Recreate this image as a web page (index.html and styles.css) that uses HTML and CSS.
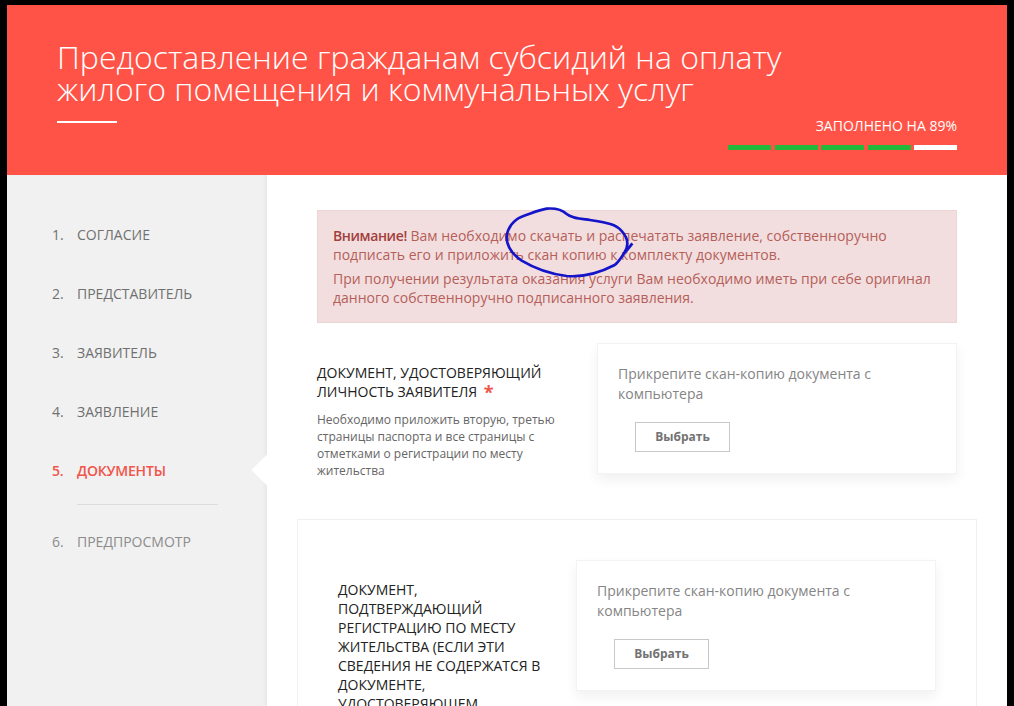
FILE: index.html
```html
<!DOCTYPE html>
<html lang="ru">
<head>
  <meta charset="UTF-8">
  <title>Предоставление гражданам субсидий</title>
  <link rel="stylesheet" href="styles.css">
</head>
<body>
  <div class="page">
    <header class="top">
      <h1>Предоставление гражданам субсидий на оплату жилого помещения и коммунальных услуг</h1>
      <div class="title-line"></div>
      <div class="progress">
        <div class="progress-text">ЗАПОЛНЕНО НА 89%</div>
        <div class="progress-bar">
          <span class="seg done"></span>
          <span class="seg done"></span>
          <span class="seg done"></span>
          <span class="seg done"></span>
          <span class="seg"></span>
        </div>
      </div>
    </header>

    <div class="main">
      <nav class="side">
        <div class="step"><span class="num">1.</span>СОГЛАСИЕ</div>
        <div class="step"><span class="num">2.</span>ПРЕДСТАВИТЕЛЬ</div>
        <div class="step"><span class="num">3.</span>ЗАЯВИТЕЛЬ</div>
        <div class="step"><span class="num">4.</span>ЗАЯВЛЕНИЕ</div>
        <div class="step active"><span class="num">5.</span>ДОКУМЕНТЫ</div>
        <div class="side-line"></div>
        <div class="step muted"><span class="num">6.</span>ПРЕДПРОСМОТР</div>
      </nav>

      <section class="content">
        <div class="alert">
          <p><b>Внимание!</b> Вам необходимо скачать и распечатать заявление, собственноручно подписать его и приложить скан копию к комплекту документов.</p>
          <p>При получении результата оказания услуги Вам необходимо иметь при себе оригинал данного собственноручно подписанного заявления.</p>
        </div>

        <div class="doc">
          <div class="doc-info">
            <h3>ДОКУМЕНТ, УДОСТОВЕРЯЮЩИЙ ЛИЧНОСТЬ ЗАЯВИТЕЛЯ <span class="req">*</span></h3>
            <p>Необходимо приложить вторую, третью страницы паспорта и все страницы с отметками о регистрации по месту жительства</p>
          </div>
          <div class="upload">
            <p>Прикрепите скан-копию документа с компьютера</p>
            <button type="button">Выбрать</button>
          </div>
        </div>

        <div class="doc-box">
          <div class="doc-info">
            <h3>ДОКУМЕНТ, ПОДТВЕРЖДАЮЩИЙ РЕГИСТРАЦИЮ ПО МЕСТУ ЖИТЕЛЬСТВА (ЕСЛИ ЭТИ СВЕДЕНИЯ НЕ СОДЕРЖАТСЯ В ДОКУМЕНТЕ, УДОСТОВЕРЯЮЩЕМ</h3>
          </div>
          <div class="upload">
            <p>Прикрепите скан-копию документа с компьютера</p>
            <button type="button">Выбрать</button>
          </div>
        </div>
      </section>
    </div>

    <svg class="scribble" width="150" height="80" viewBox="0 0 450 240">
      <path d="M397 130 C388 142 380 152 372 160 C386 140 388 118 364 92 C348 72 320 68 270 60 C240 56 215 55 200 42 C185 28 165 24 140 26 C115 30 95 40 65 50 C40 60 22 85 20 110 C20 140 40 165 65 182 C100 203 150 222 200 228 C250 232 300 218 344 195 C356 186 364 172 372 160"/>
    </svg>
  </div>
</body>
</html>
```

FILE: styles.css
```css
html, body { margin: 0; height: 100%; overflow: hidden; background: #000; }
body { font-family: "Open Sans", Arial, sans-serif; padding: 5px 7px 0; box-sizing: border-box; }
.page { width: 1000px; height: 701px; overflow: hidden; background: #fff; }

.top { height: 170px; box-sizing: border-box; background: #ff5347; color: #fff; padding: 36px 50px 0; position: relative; }
.top h1 { margin: 0; width: 800px; font-size: 32px; font-weight: 300; line-height: 32px; color: #fff; }
.title-line { width: 60px; height: 2px; background: #fff; margin-top: 16px; }
.progress { position: absolute; right: 50px; bottom: 25px; width: 229px; text-align: right; }
.progress-text { font-size: 14px; font-weight: 400; line-height: 18px; margin-bottom: 10px; white-space: nowrap; }
.progress-bar { display: flex; gap: 3.5px; }
.seg { flex: 1; height: 5px; background: #fff; }
.seg.done { background: #22b83a; }

.main { display: flex; height: 531px; }
.side { width: 260px; flex: none; box-sizing: border-box; background: #f1f1f1; padding: 50px 0 0 45px; position: relative; box-shadow: inset -4px 0 4px -3px #e2e2e2; }
.step { font-size: 14px; line-height: 20px; color: #707070; margin-bottom: 39px; }
.num { display: inline-block; width: 25px; }
.step.active { color: #f0544a; font-weight: 600; letter-spacing: -.2px; margin-bottom: 23px; }
.step.active::after { content: ""; position: absolute; right: -11px; top: 284px; width: 22px; height: 22px; background: #fff; transform: rotate(45deg); }
.step.muted { color: #8c8c8c; }
.side-line { width: 141px; height: 1px; background: #dcdcdc; margin: 0 0 27px 25px; }

.content { flex: 1; padding: 35px 50px 0; min-width: 0; position: relative; background: #fff; }
.alert { box-sizing: border-box; height: 113px; padding: 15px 15px 0; background: #f2dede; border: 1px solid #ebd5d5; color: #b55e5a; font-size: 14px; line-height: 19px; }
.alert p { margin: 0 0 5px; }
.alert b { color: #a33f3c; font-weight: 600; letter-spacing: -.4px; }

.doc { display: flex; margin-top: 20px; }
.doc .doc-info { width: 280px; padding-top: 20px; }
.doc-info h3 { margin: 0; font-size: 14px; font-weight: 500; line-height: 19px; color: #222; }
.doc-info p { margin: 10px 0 0; font-size: 12px; line-height: 17px; color: #666; width: 245px; }
.req { color: #f0544a; font-size: 18px; font-weight: 700; margin-left: 3px; line-height: 14px; vertical-align: -2px; }

.upload { width: 360px; height: 131px; flex: none; box-sizing: border-box; padding: 20px 20px 0; background: #fff; border: 1px solid #f3f3f3; box-shadow: 0 6px 12px rgba(0,0,0,.06); }
.upload p { margin: 0 0 19px; font-size: 14px; line-height: 19.5px; color: #858585; }
.upload button { display: block; width: 95px; height: 30px; margin-left: 17px; padding: 0 0 2px; background: #fff; border: 1px solid #c8c8c8; font-family: inherit; font-size: 12px; font-weight: 700; color: #737373; }
.doc .upload { margin-left: auto; }

.doc-box { display: flex; justify-content: space-between; width: 680px; height: 300px; box-sizing: border-box; margin: 40px 0 0 -20px; padding: 40px 40px 0 40px; border: 1px solid #f0f0f0; }
.doc-box .doc-info { width: 206px; padding-top: 20px; }

.scribble { position: absolute; left: 500px; top: 200px; fill: none; stroke: #1414c8; stroke-width: 8; overflow: visible; }
```
